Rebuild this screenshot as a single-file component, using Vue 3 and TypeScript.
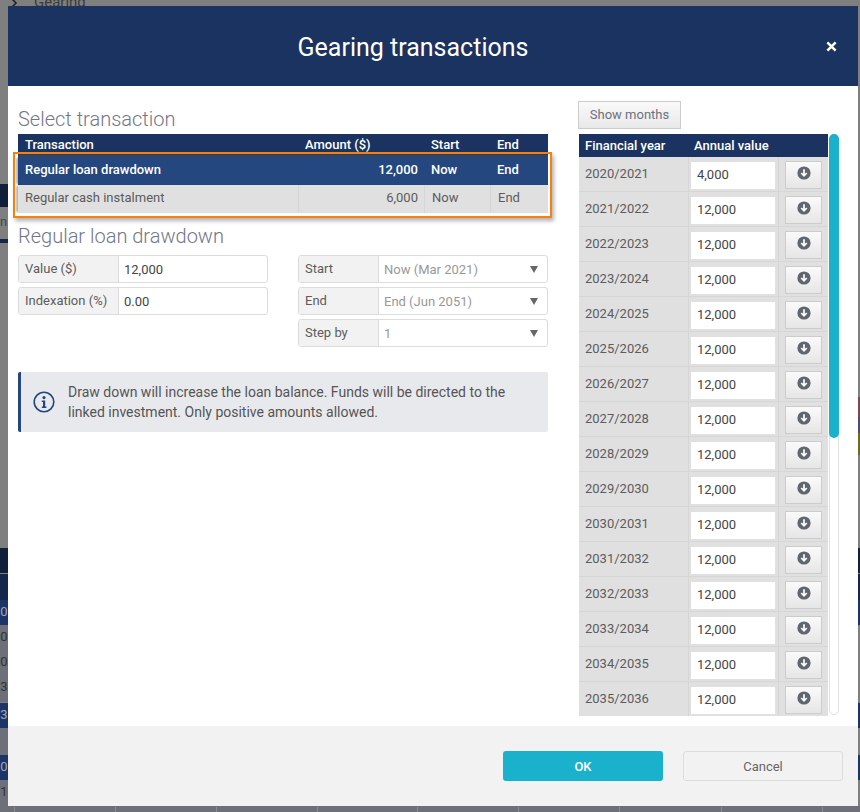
<script setup lang="ts">
const transactions = [
  { name: "Regular loan drawdown", amount: "12,000", start: "Now", end: "End", selected: true },
  { name: "Regular cash instalment", amount: "6,000", start: "Now", end: "End", selected: false },
];

const selects = [
  { label: "Start", value: "Now (Mar 2021)" },
  { label: "End", value: "End (Jun 2051)" },
  { label: "Step by", value: "1" },
];

const years = Array.from({ length: 16 }, (_, i) => ({
  label: `${2020 + i}/${2021 + i}`,
  value: i === 0 ? "4,000" : "12,000",
}));

// what shows of the page behind the modal, along its left and right edges
const stripRows = [
  { top: 184, height: 23, color: "#101f3a", ink: "#333", text: "" },
  { top: 548, height: 25, color: "#101f3a", ink: "#333", text: "" },
  { top: 574, height: 26, color: "#14264a", ink: "#333", text: "" },
  { top: 600, height: 25, color: "#1c3566", ink: "#9aa6bd", text: "00" },
  { top: 625, height: 25, color: "#6d7078", ink: "#333", text: "00" },
  { top: 650, height: 25, color: "#6d7078", ink: "#333", text: "00" },
  { top: 675, height: 27, color: "#6d7078", ink: "#333", text: "73" },
  { top: 703, height: 25, color: "#1c3566", ink: "#9aa6bd", text: "73" },
  { top: 728, height: 27, color: "#6d7078", ink: "#333", text: "" },
  { top: 755, height: 25, color: "#1c3566", ink: "#9aa6bd", text: "00" },
  { top: 780, height: 32, color: "#6d7078", ink: "#333", text: "21" },
];

const rightRows = [
  { top: 397, height: 20, color: "#7a4a50" },
  { top: 417, height: 16, color: "#4f4a6e" },
  { top: 433, height: 22, color: "#6f6a20" },
  { top: 548, height: 25, color: "#101f3a" },
  { top: 574, height: 26, color: "#14264a" },
  { top: 600, height: 25, color: "#1c3566" },
  { top: 703, height: 25, color: "#1c3566" },
  { top: 755, height: 25, color: "#1c3566" },
];

const tickLines = [14, 115, 216, 317, 417, 518, 619, 721, 822];
</script>

<template>
  <div class="backdrop">
    <div class="behind">
      <svg class="back-chevron" viewBox="0 0 8 8" width="8" height="8">
        <path d="M2 -1l4 4-4 4" fill="none" stroke="#222" stroke-width="1.6" />
      </svg>
      <span class="crumb">Gearing</span>
      <div
        v-for="row in stripRows"
        :key="row.top"
        class="strip-left"
        :style="{ top: row.top + 'px', height: row.height + 'px', background: row.color, color: row.ink }"
      >
        {{ row.text }}
      </div>
      <span class="strip-n">n</span>
      <i class="strip-line"></i>
      <div
        v-for="row in rightRows"
        :key="row.top"
        class="strip-right"
        :style="{ top: row.top + 'px', height: row.height + 'px', background: row.color }"
      ></div>
      <div class="bottom-strip">
        <i v-for="x in tickLines" :key="x" :style="{ left: x + 'px' }"></i>
      </div>
    </div>

    <section class="dialog">
      <header class="dialog-head">
        <h1>Gearing transactions</h1>
        <svg class="close" viewBox="0 0 12 12" width="11" height="11">
          <path d="M1.5 1.5l9 9M10.5 1.5l-9 9" stroke="#fff" stroke-width="2.8" />
        </svg>
      </header>

      <div class="dialog-body">
        <div class="left">
          <h2 class="first">Select transaction</h2>
          <div class="highlight">
            <div class="trow thead">
              <span>Transaction</span>
              <span>Amount ($)</span>
              <span>Start</span>
              <span>End</span>
            </div>
            <div
              v-for="t in transactions"
              :key="t.name"
              class="trow"
              :class="t.selected ? 'selected' : 'plain'"
            >
              <span>{{ t.name }}</span>
              <span class="num">{{ t.amount }}</span>
              <span>{{ t.start }}</span>
              <span>{{ t.end }}</span>
            </div>
          </div>

          <h2 class="second">Regular loan drawdown</h2>
          <div class="form">
            <div class="col">
              <div class="field">
                <label class="wide">Value ($)</label>
                <span class="input">12,000</span>
              </div>
              <div class="field">
                <label class="wide">Indexation (%)</label>
                <span class="input">0.00</span>
              </div>
            </div>
            <div class="col">
              <div v-for="s in selects" :key="s.label" class="field">
                <label>{{ s.label }}</label>
                <span class="input select">
                  {{ s.value }}
                  <i class="caret"></i>
                </span>
              </div>
            </div>
          </div>

          <div class="note">
            <svg class="info" viewBox="0 0 22 22" width="22" height="22">
              <circle cx="11" cy="11" r="9.8" fill="none" stroke="#24477f" stroke-width="1.6" />
              <circle cx="11" cy="6.6" r="1.6" fill="#24477f" />
              <path d="M8.8 9.4h3.4v6h1.2v1.6H8.8v-1.6H10v-4.4H8.8z" fill="#24477f" />
            </svg>
            <p>Draw down will increase the loan balance. Funds will be directed to the linked investment. Only positive amounts allowed.</p>
          </div>
        </div>

        <div class="right">
          <button class="months" type="button">Show months</button>
          <div class="year-wrap">
            <div class="year-table">
              <div class="yhead">
                <span>Financial year</span>
                <span>Annual value</span>
              </div>
              <div v-for="y in years" :key="y.label" class="yrow">
                <span class="ylabel">{{ y.label }}</span>
                <span class="ycell"><span class="yinput">{{ y.value }}</span></span>
                <span class="ycell btn-cell">
                  <span class="ybtn">
                    <svg viewBox="0 0 14 14" width="14" height="14">
                      <circle cx="7" cy="7" r="6.6" fill="#5f6670" />
                      <path d="M7 3.2v6.4M4.2 7l2.8 2.8L9.8 7" fill="none" stroke="#fff" stroke-width="1.7" />
                    </svg>
                  </span>
                </span>
              </div>
            </div>
            <div class="scrollbar"><div class="thumb"></div></div>
          </div>
        </div>
      </div>

      <footer class="dialog-foot">
        <button class="ok" type="button">OK</button>
        <button class="cancel" type="button">Cancel</button>
      </footer>
    </section>
  </div>
</template>

<style>
html,
body {
  margin: 0;
  background: #808080;
}
</style>

<style scoped>
.backdrop {
  position: relative;
  width: 860px;
  height: 812px;
  overflow: hidden;
  background: #7f7f7f;
  font-family: Roboto, "Liberation Sans", sans-serif;
  font-size: 13px;
  color: #555;
  box-sizing: border-box;
  padding: 6px 2px 6px 8px;
}

.behind {
  position: absolute;
  inset: 0;
}

.back-chevron {
  position: absolute;
  left: 10px;
  top: 0;
}

.crumb {
  position: absolute;
  left: 34px;
  top: -7px;
  font-size: 15px;
  color: #3a3a3a;
}

.strip-left {
  position: absolute;
  left: -8px;
  width: 16px;
  box-sizing: border-box;
  padding-left: 1px;
  overflow: hidden;
  font-size: 13px;
  line-height: 24px;
  white-space: nowrap;
}

.strip-n {
  position: absolute;
  left: 0;
  top: 214px;
  width: 8px;
  overflow: hidden;
  color: #3d4a4f;
}

.strip-line {
  position: absolute;
  left: 0;
  top: 239px;
  width: 8px;
  height: 4px;
  background: #14264a;
}

.strip-right {
  position: absolute;
  left: 858px;
  width: 2px;
}

.bottom-strip {
  position: absolute;
  left: 0;
  right: 0;
  top: 806px;
  height: 6px;
  background: #6d7078;
}

.bottom-strip i {
  position: absolute;
  top: 1px;
  bottom: 0;
  width: 1px;
  background: #8a8d93;
}

.dialog {
  position: relative;
  display: flex;
  flex-direction: column;
  height: 100%;
  background: #fff;
}

.dialog-head {
  position: relative;
  flex: none;
  height: 80px;
  box-sizing: border-box;
  padding-right: 40px;
  display: flex;
  align-items: center;
  justify-content: center;
  background: #1b3360;
  color: #fff;
}

.dialog-head h1 {
  margin: 0;
  font-size: 25px;
  font-weight: 400;
  position: relative;
  top: 1px;
}

.close {
  position: absolute;
  right: 21px;
  top: 35px;
}

.dialog-body {
  flex: 1;
  min-height: 0;
  display: flex;
  gap: 30px;
  padding: 15px 18px 10px 10px;
  overflow: hidden;
}

.left {
  width: 530px;
  flex: none;
}

h2 {
  margin: 0;
  font-size: 20px;
  font-weight: 300;
  line-height: 24px;
  color: #73768a;
}

h2.first {
  padding-top: 6px;
}

h2.second {
  margin-top: 11px;
}

.highlight {
  position: relative;
  margin-top: 3px;
}

.highlight::after {
  content: "";
  position: absolute;
  left: -5px;
  right: -4px;
  top: 18px;
  height: 66px;
  box-sizing: border-box;
  border: 2px solid #f5810f;
  box-shadow: 2px 3px 4px rgba(0, 0, 0, 0.3);
  pointer-events: none;
}

.trow {
  display: grid;
  grid-template-columns: 280px 126px 66px 58px;
  height: 28px;
  font-size: 13px;
}

.trow > span {
  height: 100%;
  display: flex;
  align-items: center;
  padding: 0 7px 3px;
  box-sizing: border-box;
}

.trow .num {
  justify-content: flex-end;
  padding-right: 6px;
}

.thead {
  height: 23px;
  background: linear-gradient(#1b3360 80%, #3a4a68);
  color: #fff;
  font-weight: 500;
}

.trow.selected {
  background: #24477f;
  color: #fff;
  font-weight: 500;
  box-shadow: -3px 0 2px -1px rgba(0, 0, 0, 0.3);
}

.trow.plain {
  background: #e0e0e0;
  color: #5c5c5c;
  box-shadow: -3px 0 2px -1px rgba(0, 0, 0, 0.3);
}

.trow.plain > span + span {
  border-left: 1px solid #d6d6d6;
}

.form {
  display: flex;
  gap: 30px;
  margin-top: 7px;
}

.col {
  width: 250px;
  display: flex;
  flex-direction: column;
  gap: 4px;
}

.field {
  display: flex;
  height: 28px;
  box-sizing: border-box;
  border: 1px solid #dcdcdc;
  border-radius: 3px;
  overflow: hidden;
}

.field label {
  flex: none;
  width: 80px;
  padding-left: 6px;
  box-sizing: border-box;
  background: #f2f2f2;
  border-right: 1px solid #dcdcdc;
  line-height: 25px;
  color: #5c5c5c;
}

.field label.wide {
  width: 100px;
  line-height: 26px;
}

.input {
  position: relative;
  flex: 1;
  padding-left: 5px;
  line-height: 28px;
  color: #444;
}

.select {
  color: #999;
}

.caret {
  position: absolute;
  right: 9px;
  top: 10px;
  border-left: 4px solid transparent;
  border-right: 4px solid transparent;
  border-top: 7px solid #666;
}

.note {
  display: flex;
  align-items: center;
  gap: 13px;
  margin-top: 25px;
  height: 60px;
  box-sizing: border-box;
  padding: 0 20px 0 12px;
  background: #e8e9ed;
  border-left: 3px solid #24477f;
  border-radius: 2px;
}

.info {
  flex: none;
}

.note p {
  margin: 0;
  font-size: 14px;
  line-height: 20px;
  color: #555;
}

.right {
  width: 262px;
  flex: none;
  min-height: 0;
  display: flex;
  flex-direction: column;
}

.months {
  flex: none;
  width: 103px;
  height: 28px;
  padding: 0 0 2px;
  border: 1px solid #ccc;
  background: linear-gradient(#fafafa, #e8e8e8);
  color: #6a7280;
  font: inherit;
  font-size: 13px;
}

.year-wrap {
  flex: 1;
  min-height: 0;
  display: flex;
  margin-top: 5px;
  gap: 1px;
  overflow: hidden;
}

.year-table {
  flex: none;
  width: 249px;
  margin-left: 1px;
  background: #e0e0e0;
  overflow: hidden;
}

.yhead {
  display: grid;
  grid-template-columns: 109px 140px;
  height: 23px;
  align-items: center;
  background: #1b3360;
  color: #fff;
  font-size: 13px;
  font-weight: 500;
}

.yhead span {
  padding-left: 6px;
}

.yrow {
  display: grid;
  grid-template-columns: 109px 90px 50px;
  height: 35px;
  box-sizing: border-box;
  border-bottom: 1px solid #d6d6d6;
}

.ylabel {
  padding: 8px 0 0 6px;
  line-height: 17px;
  color: #5c5c5c;
}

.ycell {
  border-left: 1px solid #d6d6d6;
  padding-top: 5px;
  padding-left: 2px;
  box-sizing: border-box;
}

.yinput {
  display: block;
  width: 84px;
  height: 27px;
  box-sizing: border-box;
  padding-left: 6px;
  line-height: 26px;
  background: #fff;
  color: #444;
}

.ybtn {
  display: flex;
  justify-content: center;
  padding-top: 4px;
  width: 37px;
  height: 28px;
  box-sizing: border-box;
  border: 1px solid #ccc;
  background: linear-gradient(#fafafa, #e6e6e6);
}

.btn-cell {
  padding-left: 6px;
  padding-top: 4px;
}

.scrollbar {
  flex: none;
  width: 10px;
  position: relative;
  box-sizing: border-box;
  border: 1px solid #e0e0e0;
  border-radius: 5px;
  height: 581px;
}

.thumb {
  position: absolute;
  left: -1px;
  right: -1px;
  top: -1px;
  height: 304px;
  background: #1ab1cc;
  border-radius: 5px;
}

.dialog-foot {
  flex: none;
  height: 80px;
  box-sizing: border-box;
  padding: 25px 15px 0 0;
  display: flex;
  justify-content: flex-end;
  gap: 20px;
  background: #f2f2f2;
}

.ok,
.cancel {
  width: 160px;
  height: 30px;
  padding: 0;
  border-radius: 3px;
  font: inherit;
  font-size: 13px;
}

.ok {
  border: 0;
  background: #1ab1cc;
  color: #fff;
  font-weight: 500;
}

.cancel {
  border: 1px solid #dcdcdc;
  background: transparent;
  color: #666;
}
</style>
